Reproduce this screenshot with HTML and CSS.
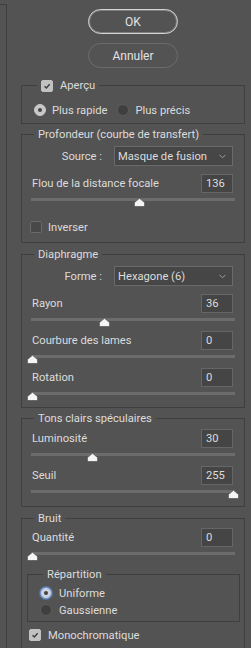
FILE: index.html
```html
<!DOCTYPE html>
<html lang="fr">
<head>
<meta charset="utf-8">
<title>Flou de l'objectif</title>
<link rel="stylesheet" href="styles.css">
</head>
<body>
<div class="dialog">
  <div class="side"></div>
  <div class="main">
    <div class="buttons">
      <div class="btn btn-primary">OK</div>
      <div class="btn">Annuler</div>
    </div>

    <fieldset class="group g-preview">
      <legend class="legend-check"><span class="check on"><svg viewBox="0 0 12 12"><polyline points="3,6.2 5.2,8.3 9.2,3.8"/></svg></span><span>Aperçu</span></legend>
      <div class="radio-row">
        <div class="opt"><span class="radio on"></span>Plus rapide</div>
        <div class="opt"><span class="radio"></span>Plus précis</div>
      </div>
    </fieldset>

    <fieldset class="group g-depth">
      <legend>Profondeur (courbe de transfert)</legend>
      <div class="select-row">
        <span class="sel-label">Source :</span>
        <div class="select"><span>Masque de fusion</span><svg class="chev" viewBox="0 0 8 5"><polyline points="0.5,0.5 4,4 7.5,0.5"/></svg></div>
      </div>
      <div class="field"><span>Flou de la distance focale</span><div class="num">136</div></div>
      <div class="slider"><div class="track"></div><svg class="thumb" style="--v:0.533" viewBox="0 0 11 9"><polygon points="5.5,0.3 10.6,4.6 10.6,8.6 0.4,8.6 0.4,4.6"/></svg></div>
      <div class="check-row"><span class="check"></span>Inverser</div>
    </fieldset>

    <fieldset class="group g-iris">
      <legend>Diaphragme</legend>
      <div class="select-row">
        <span class="sel-label">Forme :</span>
        <div class="select"><span>Hexagone (6)</span><svg class="chev" viewBox="0 0 8 5"><polyline points="0.5,0.5 4,4 7.5,0.5"/></svg></div>
      </div>
      <div class="field"><span>Rayon</span><div class="num">36</div></div>
      <div class="slider"><div class="track"></div><svg class="thumb" style="--v:0.36" viewBox="0 0 11 9"><polygon points="5.5,0.3 10.6,4.6 10.6,8.6 0.4,8.6 0.4,4.6"/></svg></div>
      <div class="field"><span>Courbure des lames</span><div class="num">0</div></div>
      <div class="slider"><div class="track"></div><svg class="thumb" style="--v:0" viewBox="0 0 11 9"><polygon points="5.5,0.3 10.6,4.6 10.6,8.6 0.4,8.6 0.4,4.6"/></svg></div>
      <div class="field"><span>Rotation</span><div class="num">0</div></div>
      <div class="slider"><div class="track"></div><svg class="thumb" style="--v:0" viewBox="0 0 11 9"><polygon points="5.5,0.3 10.6,4.6 10.6,8.6 0.4,8.6 0.4,4.6"/></svg></div>
    </fieldset>

    <fieldset class="group g-spec">
      <legend>Tons clairs spéculaires</legend>
      <div class="field"><span>Luminosité</span><div class="num">30</div></div>
      <div class="slider"><div class="track"></div><svg class="thumb" style="--v:0.30" viewBox="0 0 11 9"><polygon points="5.5,0.3 10.6,4.6 10.6,8.6 0.4,8.6 0.4,4.6"/></svg></div>
      <div class="field"><span>Seuil</span><div class="num">255</div></div>
      <div class="slider"><div class="track"></div><svg class="thumb" style="--v:1" viewBox="0 0 11 9"><polygon points="5.5,0.3 10.6,4.6 10.6,8.6 0.4,8.6 0.4,4.6"/></svg></div>
    </fieldset>

    <fieldset class="group g-noise">
      <legend>Bruit</legend>
      <div class="field"><span>Quantité</span><div class="num">0</div></div>
      <div class="slider"><div class="track"></div><svg class="thumb" style="--v:0" viewBox="0 0 11 9"><polygon points="5.5,0.3 10.6,4.6 10.6,8.6 0.4,8.6 0.4,4.6"/></svg></div>
      <fieldset class="subgroup">
        <legend>Répartition</legend>
        <div class="opt-col"><span class="radio on focus"></span>Uniforme</div>
        <div class="opt-col"><span class="radio"></span>Gaussienne</div>
      </fieldset>
      <div class="check-row mono"><span class="check on"><svg viewBox="0 0 12 12"><polyline points="3,6.2 5.2,8.3 9.2,3.8"/></svg></span>Monochromatique</div>
    </fieldset>
  </div>
</div>
</body>
</html>
```

FILE: styles.css
```css
* { box-sizing: border-box; }
html, body { margin: 0; padding: 0; }
body {
  background: #535353;
  width: 251px;
  height: 648px;
  overflow: hidden;
  font-family: Roboto, "Noto Sans", "DejaVu Sans", sans-serif;
  font-size: 11.2px;
  color: #dcdcdc;
}
.dialog { display: flex; height: 648px; }
.side {
  flex: none;
  width: 7px;
  margin-top: 4px;
  border-top: 1px solid #3f3f3f;
  border-right: 1px solid #3f3f3f;
}
.main {
  flex: none;
  width: 224px;
  margin-left: 14px;
  display: flex;
  flex-direction: column;
}

/* buttons */
.buttons {
  display: flex;
  flex-direction: column;
  align-items: center;
  gap: 9px;
  padding-top: 9px;
}
.btn {
  width: 90px;
  height: 25px;
  border: 1px solid #6c6c6c;
  border-radius: 13px;
  display: flex;
  align-items: center;
  justify-content: center;
  font-size: 12px;
  color: #e2e2e2;
}
.btn-primary {
  border-color: #d4d4d4;
  box-shadow: inset 0 0 0 1px rgba(212, 212, 212, 0.35);
}

/* group boxes */
.group {
  margin: 3px 0 0;
  padding: 0 9px 6px;
  border: 1px solid #3f3f3f;
  min-width: 0;
}
.g-preview { margin-top: 10px; padding-bottom: 5px; }
.g-depth { padding-bottom: 8px; }
.g-iris { margin-top: 4px; }
.g-spec { padding-bottom: 7px; }
.g-noise { margin-top: 4px; padding-bottom: 12px; }

.group legend {
  margin-left: 3px;
  padding: 0 4px;
  line-height: 15px;
}
.g-preview legend {
  margin-left: 6px;
  display: flex;
  align-items: center;
  gap: 7px;
}

/* checkboxes and radios */
.check {
  flex: none;
  width: 12px;
  height: 12px;
  border: 1px solid #6a6a6a;
  background: #484848;
  border-radius: 2px;
  display: inline-flex;
}
.check.on { background: #c2c2c2; border-color: #c2c2c2; }
.check svg { width: 10px; height: 10px; fill: none; stroke: #3c3c3c; stroke-width: 1.7; }
.radio {
  flex: none;
  width: 12px;
  height: 12px;
  border-radius: 50%;
  background: #3f3f3f;
  border: 1px solid #5c5c5c;
  display: inline-flex;
  align-items: center;
  justify-content: center;
}
.radio.on { background: #c8c8c8; border-color: #c8c8c8; }
.radio.on::after {
  content: "";
  width: 4px;
  height: 4px;
  border-radius: 50%;
  background: #444;
}
.radio.focus { border-color: #6d97d6; box-shadow: 0 0 0 1px rgba(90, 140, 215, 0.55); background: #ccd3de; }

.radio-row {
  display: flex;
  align-items: center;
  height: 16px;
  margin-top: 9px;
  padding-left: 3px;
  gap: 10px;
}
.opt { display: flex; align-items: center; gap: 6px; }

/* rows */
.select-row {
  display: flex;
  justify-content: flex-end;
  align-items: center;
  gap: 12px;
  margin-top: 4px;
  padding-right: 2px;
}
.select {
  width: 119px;
  height: 20px;
  background: #464646;
  border: 1px solid #6a6a6a;
  display: flex;
  align-items: center;
  justify-content: space-between;
  padding: 0 6px 0 3px;
}
.chev { width: 7px; height: 5px; fill: none; stroke: #a8a8a8; stroke-width: 1; }

.field {
  display: flex;
  justify-content: space-between;
  align-items: center;
  height: 19px;
  margin-top: 4px;
  padding-right: 2px;
  padding-left: 1px;
}
.select-row + .field { margin-top: 8px; }
.g-spec .field:first-of-type { margin-top: 3px; }
.g-noise > .field:first-of-type { margin-top: 2px; }
.num {
  width: 32px;
  height: 19px;
  background: #454545;
  border: 1px solid #666;
  padding-left: 4px;
  line-height: 17px;
}

.slider {
  position: relative;
  height: 9px;
  margin-top: 5px;
}
.track {
  margin-top: 3px;
  height: 3px;
  background: #6c6c6c;
}
.thumb {
  position: absolute;
  top: 0;
  left: calc(var(--v) * (100% - 3px) - 4px);
  width: 11px;
  height: 9px;
  fill: #f4f4f4;
  stroke: #3a3a3a;
  stroke-width: 0.6;
}

.check-row {
  display: flex;
  align-items: center;
  gap: 6px;
  height: 14px;
  margin-top: 13px;
  margin-left: -1px;
}

/* noise distribution */
.subgroup {
  margin: 6px -5px 0 -4px;
  padding: 0 12px 3px;
  border: 1px solid #3f3f3f;
  min-width: 0;
}
.subgroup legend {
  padding: 0 4px;
  line-height: 15px;
}
.opt-col {
  display: flex;
  align-items: center;
  gap: 7px;
  height: 16px;
  margin-top: 1px;
}
.subgroup legend + .opt-col { margin-top: 3px; }
.mono { margin-top: 6px; margin-left: -2px; gap: 7px; }
```
